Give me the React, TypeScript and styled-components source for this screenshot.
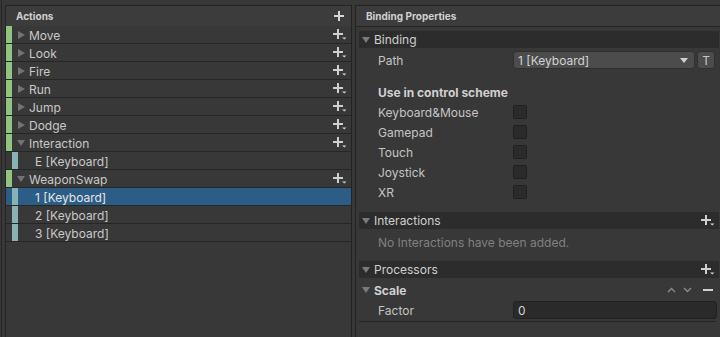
import React from 'react';
import styled, { createGlobalStyle } from 'styled-components';

const Global = createGlobalStyle`
  html, body { margin: 0; padding: 0; background: #383838; overflow: hidden; }
  body { font-family: Inter, "Noto Sans", sans-serif; }
  #root { width: 720px; height: 337px; }
`;

const Root = styled.div`
  display: flex;
  box-sizing: border-box;
  width: 719px;
  height: 337px;
  margin-left: 1px;
  border-left: 1px solid #262626;
  padding-top: 5px;
  background: #383838;
  color: #c8c8c8;
  font-size: 12px;
`;

const LeftPanel = styled.div`
  display: flex;
  flex-direction: column;
  box-sizing: border-box;
  width: 347px;
  margin-left: 3px;
  border: 1px solid #232323;
  border-bottom: none;
  background: #383838;
`;

const PanelHeader = styled.div<{ $line?: boolean }>`
  display: flex;
  align-items: center;
  justify-content: space-between;
  box-sizing: border-box;
  height: ${p => (p.$line ? 21 : 20)}px;
  padding: 0 7px 0 10px;
  background: #3c3c3c;
  border-bottom: ${p => (p.$line ? '1px solid #242424' : 'none')};
`;

const HeaderTitle = styled.span`
  font-size: 10px;
  font-weight: 700;
  color: #d0d0d0;
`;

const Row = styled.div<{ $selected?: boolean }>`
  display: flex;
  align-items: center;
  box-sizing: border-box;
  height: 18px;
  padding-right: 4px;
  border-bottom: 1px solid #262626;
  background: ${p => (p.$selected ? '#2c5d87' : '#383838')};
  color: ${p => (p.$selected ? '#e6e6e6' : '#c8c8c8')};
`;

const Bar = styled.div<{ $kind: 'action' | 'binding' }>`
  flex: none;
  width: 6px;
  align-self: stretch;
  margin-left: ${p => (p.$kind === 'binding' ? 6 : 0)}px;
  margin-right: ${p => (p.$kind === 'binding' ? 17 : 5)}px;
  background: ${p => (p.$kind === 'binding' ? '#89b2b5' : '#93c47f')};
`;

const RowLabel = styled.span`
  flex: 1;
  padding-top: 1px;
  white-space: nowrap;
`;

const RowTool = styled.span`
  display: flex;
  align-items: center;
  flex: none;
`;

const Empty = styled.div`
  flex: 1;
`;

const RightPanel = styled.div`
  display: flex;
  flex-direction: column;
  flex: 1;
  margin-left: 3px;
  border-left: 1px solid #232323;
  border-top: 1px solid #232323;
`;

const Content = styled.div`
  display: flex;
  flex-direction: column;
  padding: 4px 1px 0 3px;
`;

const Foldout = styled.div<{ $gap?: number }>`
  display: flex;
  align-items: center;
  height: 17px;
  margin-top: ${p => p.$gap ?? 0}px;
  padding: 0 4px 0 3px;
  background: #2c2c2c;
  color: #cfcfcf;
`;

const FoldTitle = styled.span<{ $bold?: boolean }>`
  flex: 1;
  margin-left: 4px;
  font-weight: ${p => (p.$bold ? 700 : 400)};
`;

const PropRow = styled.div<{ $gap?: number }>`
  display: flex;
  align-items: center;
  height: 20px;
  margin-top: ${p => p.$gap ?? 0}px;
  padding-left: 19px;
  padding-right: 2px;
`;

const PropLabel = styled.span<{ $bold?: boolean; $muted?: boolean }>`
  flex: none;
  width: 135px;
  white-space: nowrap;
  font-weight: ${p => (p.$bold ? 700 : 400)};
  color: ${p => (p.$muted ? '#808080' : p.$bold ? '#d0d0d0' : '#c4c4c4')};
`;

const Dropdown = styled.div`
  display: flex;
  align-items: center;
  justify-content: space-between;
  box-sizing: border-box;
  width: 182px;
  height: 18px;
  padding: 0 6px 0 4px;
  background: #4c4c4c;
  border: 1px solid #303030;
  border-radius: 3px;
  color: #d2d2d2;
`;

const TButton = styled.div`
  display: flex;
  align-items: center;
  justify-content: center;
  box-sizing: border-box;
  width: 18px;
  height: 18px;
  margin-left: 2px;
  background: #4c4c4c;
  border: 1px solid #303030;
  border-radius: 3px;
  color: #c8c8c8;
  font-size: 12px;
`;

const Checkbox = styled.div`
  box-sizing: border-box;
  width: 14px;
  height: 14px;
  background: #2b2b2b;
  border: 1px solid #202020;
  border-radius: 2px;
`;

const SubHeader = styled.div`
  display: flex;
  align-items: center;
  height: 20px;
  margin-top: 2px;
  padding: 0 6px 0 3px;
  color: #d0d0d0;
`;

const ToolGroup = styled.div`
  display: flex;
  align-items: center;
`;

const ToolSlot = styled.span<{ $gap: number }>`
  display: flex;
  margin-left: ${p => p.$gap}px;
`;

const Field = styled.div`
  display: flex;
  align-items: center;
  box-sizing: border-box;
  flex: 1;
  height: 18px;
  padding-left: 4px;
  background: #2a2a2a;
  border: 1px solid #212121;
  border-radius: 3px;
  color: #d2d2d2;
`;

const Separator = styled.div`
  height: 1px;
  margin: 1px 3px 0 0;
  background: #232323;
`;

const TriWrap = styled.span`
  display: flex;
  width: 12px;
  flex: none;
`;

const Triangle = ({ open, color = '#737373' }: { open?: boolean; color?: string }) => (
  <svg width="8" height="8" viewBox="0 0 8 8" style={{ flex: 'none' }}>
    {open ? (
      <polygon points="0,1 8,1 4,7" fill={color} />
    ) : (
      <polygon points="1,0 8,4 1,8" fill={color} />
    )}
  </svg>
);

const PlusDrop = () => (
  <svg width="14" height="11" viewBox="0 0 14 11">
    <rect x="0" y="4" width="10" height="2" fill="#cfcfcf" />
    <rect x="4" y="0" width="2" height="10" fill="#cfcfcf" />
    <polygon points="9,8.5 13.5,8.5 11.25,10.5" fill="#cfcfcf" />
  </svg>
);

const Plus = () => (
  <svg width="10" height="10" viewBox="0 0 10 10">
    <rect x="0" y="4" width="10" height="2" fill="#d6d6d6" />
    <rect x="4" y="0" width="2" height="10" fill="#d6d6d6" />
  </svg>
);

const Chevron = ({ up }: { up?: boolean }) => (
  <svg width="9" height="6" viewBox="0 0 9 6">
    <polyline
      points={up ? '1,5 4.5,1.5 8,5' : '1,1 4.5,4.5 8,1'}
      fill="none"
      stroke="#8a8a8a"
      strokeWidth="1.4"
    />
  </svg>
);

const Minus = () => (
  <svg width="10" height="2" viewBox="0 0 10 2">
    <rect x="0" y="0" width="10" height="2" fill="#d0d0d0" />
  </svg>
);

const DropArrow = () => (
  <svg width="8" height="5" viewBox="0 0 8 5">
    <polygon points="0,0 8,0 4,5" fill="#d0d0d0" />
  </svg>
);

type Item =
  | { kind: 'action'; name: string; open?: boolean }
  | { kind: 'binding'; name: string; selected?: boolean };

const items: Item[] = [
  { kind: 'action', name: 'Move' },
  { kind: 'action', name: 'Look' },
  { kind: 'action', name: 'Fire' },
  { kind: 'action', name: 'Run' },
  { kind: 'action', name: 'Jump' },
  { kind: 'action', name: 'Dodge' },
  { kind: 'action', name: 'Interaction', open: true },
  { kind: 'binding', name: 'E [Keyboard]' },
  { kind: 'action', name: 'WeaponSwap', open: true },
  { kind: 'binding', name: '1 [Keyboard]', selected: true },
  { kind: 'binding', name: '2 [Keyboard]' },
  { kind: 'binding', name: '3 [Keyboard]' },
];

const schemes = ['Keyboard&Mouse', 'Gamepad', 'Touch', 'Joystick', 'XR'];

export default function App() {
  return (
    <>
      <Global />
      <Root>
        <LeftPanel>
          <PanelHeader>
            <HeaderTitle>Actions</HeaderTitle>
            <Plus />
          </PanelHeader>
          {items.map((it, i) =>
            it.kind === 'action' ? (
              <Row key={i}>
                <Bar $kind="action" />
                <TriWrap>
                  <Triangle open={it.open} />
                </TriWrap>
                <RowLabel>{it.name}</RowLabel>
                <RowTool>
                  <PlusDrop />
                </RowTool>
              </Row>
            ) : (
              <Row key={i} $selected={it.selected}>
                <Bar $kind="binding" />
                <RowLabel>{it.name}</RowLabel>
              </Row>
            )
          )}
          <Empty />
        </LeftPanel>
        <RightPanel>
          <PanelHeader $line>
            <HeaderTitle>Binding Properties</HeaderTitle>
          </PanelHeader>
          <Content>
            <Foldout>
              <Triangle open color="#7a7a7a" />
              <FoldTitle>Binding</FoldTitle>
            </Foldout>
            <PropRow $gap={2}>
              <PropLabel>Path</PropLabel>
              <Dropdown>
                <span>1 [Keyboard]</span>
                <DropArrow />
              </Dropdown>
              <TButton>T</TButton>
            </PropRow>
            <PropRow $gap={12}>
              <PropLabel $bold>Use in control scheme</PropLabel>
            </PropRow>
            {schemes.map(s => (
              <PropRow key={s}>
                <PropLabel>{s}</PropLabel>
                <Checkbox />
              </PropRow>
            ))}
            <Foldout $gap={10}>
              <Triangle open color="#7a7a7a" />
              <FoldTitle>Interactions</FoldTitle>
              <PlusDrop />
            </Foldout>
            <PropRow $gap={3}>
              <PropLabel $muted>No Interactions have been added.</PropLabel>
            </PropRow>
            <Foldout $gap={9}>
              <Triangle open color="#7a7a7a" />
              <FoldTitle>Processors</FoldTitle>
              <PlusDrop />
            </Foldout>
            <SubHeader>
              <Triangle open color="#7a7a7a" />
              <FoldTitle $bold>Scale</FoldTitle>
              <ToolGroup>
                <ToolSlot $gap={0}>
                  <Chevron up />
                </ToolSlot>
                <ToolSlot $gap={7}>
                  <Chevron />
                </ToolSlot>
                <ToolSlot $gap={11}>
                  <Minus />
                </ToolSlot>
              </ToolGroup>
            </SubHeader>
            <PropRow>
              <PropLabel>Factor</PropLabel>
              <Field>0</Field>
            </PropRow>
            <Separator />
          </Content>
        </RightPanel>
      </Root>
    </>
  );
}
